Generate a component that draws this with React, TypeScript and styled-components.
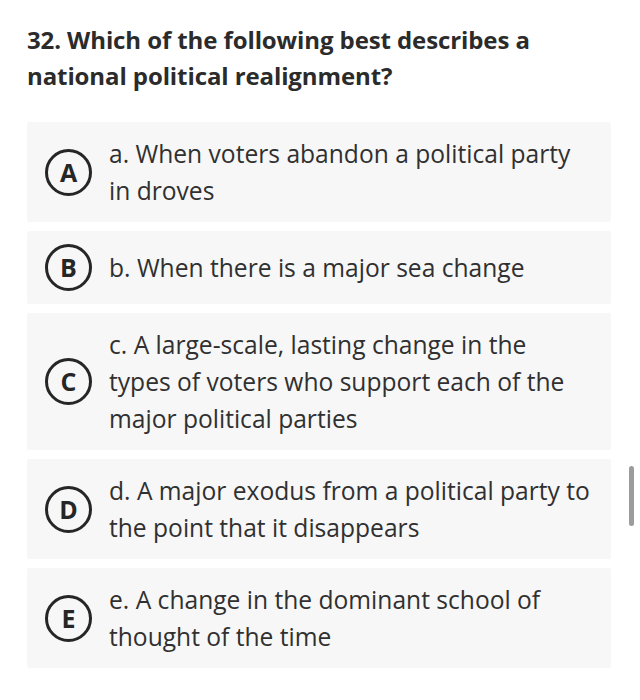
import React from 'react';
import styled, { createGlobalStyle } from 'styled-components';

const GlobalStyle = createGlobalStyle`
  html, body {
    margin: 0;
    padding: 0;
    background: #ffffff;
  }
  body {
    font-family: "Open Sans", "Liberation Sans", sans-serif;
    color: #2e2e2e;
  }
`;

const Page = styled.div`
  position: relative;
  width: 640px;
  height: 700px;
  box-sizing: border-box;
  padding: 22px 29px 0 27px;
  overflow: hidden;
`;

const Question = styled.h1`
  margin: 0 0 28px;
  font-size: 24px;
  line-height: 36px;
  font-weight: 700;
  color: #2b2b2b;
  letter-spacing: -0.1px;
`;

const Options = styled.div`
  display: flex;
  flex-direction: column;
  gap: 9px;
`;

const Card = styled.div`
  display: flex;
  align-items: center;
  gap: 17px;
  padding: 13px 19px 13px 18px;
  background: #f7f7f7;
  border-radius: 2px;
`;

const Letter = styled.div`
  flex: 0 0 auto;
  width: 47px;
  height: 47px;
  box-sizing: border-box;
  border: 3px solid #262626;
  border-radius: 50%;
  display: flex;
  align-items: center;
  justify-content: center;
  font-size: 25px;
  line-height: 1;
  font-weight: 700;
  color: #262626;
`;

const Text = styled.div`
  font-size: 24.6px;
  line-height: 37px;
  font-weight: 500;
  color: #303030;
`;

const Scrollbar = styled.div`
  position: absolute;
  left: 629px;
  top: 466px;
  width: 5px;
  height: 60px;
  border-radius: 3px;
  background: #9c9c9c;
`;

const options = [
  { key: 'A', text: 'a. When voters abandon a political party in droves' },
  { key: 'B', text: 'b. When there is a major sea change' },
  {
    key: 'C',
    text: 'c. A large-scale, lasting change in the types of voters who support each of the major political parties',
  },
  { key: 'D', text: 'd. A major exodus from a political party to the point that it disappears' },
  { key: 'E', text: 'e. A change in the dominant school of thought of the time' },
];

const App = () => {
  return (
    <Page>
      <GlobalStyle />
      <Question>32. Which of the following best describes a national political realignment?</Question>
      <Options>
        {options.map((o) => (
          <Card key={o.key}>
            <Letter>{o.key}</Letter>
            <Text>{o.text}</Text>
          </Card>
        ))}
      </Options>
      <Scrollbar />
    </Page>
  );
};

export default App;
